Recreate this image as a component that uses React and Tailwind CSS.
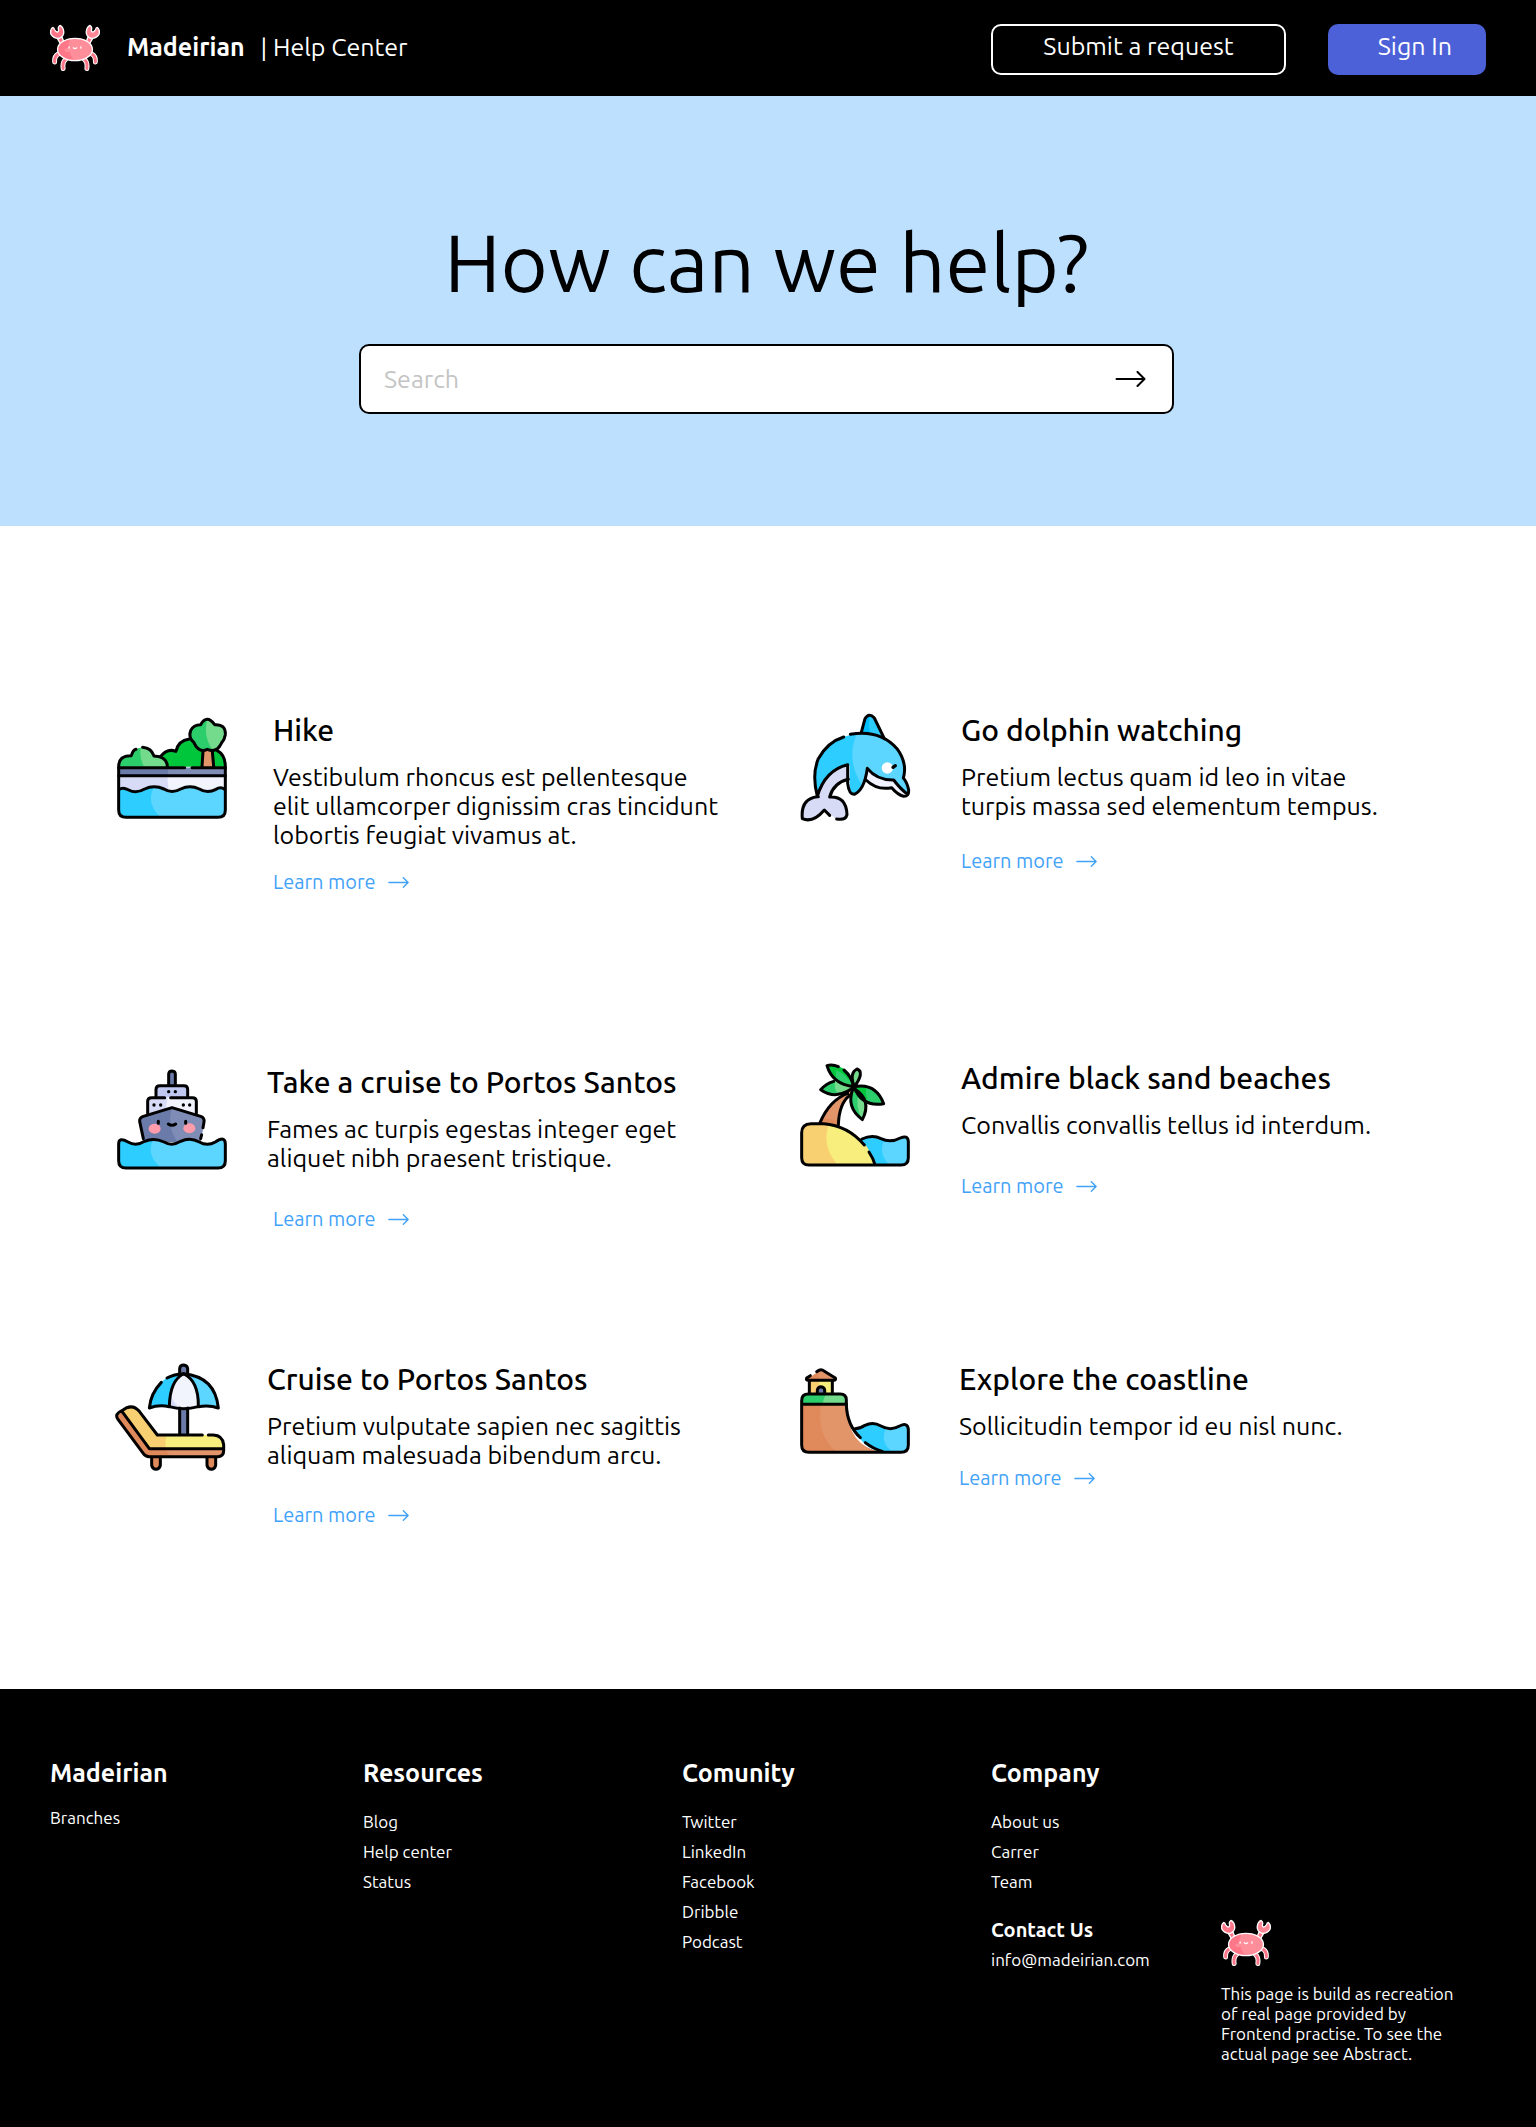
import React from "react";

const outline = {
  stroke: "#000",
  strokeWidth: 9,
  strokeLinecap: "round",
  strokeLinejoin: "round",
  fill: "none",
};

function IconFrame({ top, children }) {
  return (
    <svg
      className="h-[115px] w-[114px] shrink-0"
      viewBox={`45 ${top} 342 345`}
      aria-hidden="true"
    >
      {children}
    </svg>
  );
}

function HikeIcon() {
  return (
    <IconFrame top={30}>
      <path fill="#00C63C" d="M180 200V168Q200 145 230 155Q235 124 270 117L350 150Q374 166 376 200Z" />
      <path fill="#2BCE6A" d="M56 200Q56 166 94 167Q100 145 128 142Q154 144 162 168Q202 170 202 200Z" />
      <path fill="#74DB8C" d="M123 142Q154 144 162 168Q202 170 202 200H132Q116 170 123 142Z" />
      <path fill="#E3956A" d="M309 152H337L341 202H305Z" />
      <path fill="#2BCE6A" d="M302 74Q320 42 344 74Q378 72 376 104Q374 118 364 130Q350 160 322 148Q296 160 282 128Q264 112 272 92Q280 74 302 74Z" />
      <path fill="#74DB8C" d="M322 57Q337 58 344 74Q378 72 376 104Q374 118 364 130Q352 152 338 150Q308 108 322 57Z" />
      <path fill="#6B7BA9" d="M56 203H376V227H56Z" />
      <path fill="#7F8CB5" d="M206 203H376V227H202Z" />
      <path fill="#D7DBF5" d="M56 227H376V272H56Z" />
      <path fill="#F1F3FD" d="M202 227H376V272H206Z" />
      <path fill="#2DCEFF" d="M56 268Q68 260 86 270Q108 282 134 267Q162 254 192 267Q216 282 242 267Q270 254 298 267Q322 282 348 268Q362 258 376 268V330Q376 352 354 352H78Q56 352 56 330Z" />
      <path fill="#5CD5FF" d="M162 262Q178 261 192 267Q216 282 242 267Q270 254 298 267Q322 282 348 268Q362 258 376 268V330Q376 352 354 352H182Q136 310 162 262Z" />
      <g {...outline}>
        <path d="M182 169Q202 144 228 154Q234 122 268 117" />
        <path d="M352 152Q376 165 376 200V330Q376 352 354 352H78Q56 352 56 330V200Q56 166 94 167Q99 150 108 148" />
        <path d="M128 142Q154 144 162 168Q202 170 202 200" />
        <path d="M302 74Q320 42 344 74Q378 72 376 104Q374 118 364 130Q350 160 322 148Q296 160 282 128Q264 112 272 92Q280 74 302 74Z" />
        <path d="M309 154L306 200M337 154L341 200M56 203H254M276 203H376M56 227H376" />
        <path d="M58 268Q68 260 86 270Q108 282 134 267Q162 254 192 267Q216 282 242 267Q270 254 298 267Q322 282 348 268Q362 258 374 268" />
      </g>
    </IconFrame>
  );
}

function DolphinIcon() {
  return (
    <IconFrame top={30}>
      <path fill="#00BFFF" d="M229 98L240 56Q252 36 268 54L296 116Z" />
      <path fill="#2DCEFF" d="M256 46Q264 47 268 54L296 116L256 102Q248 70 256 46Z" />
      <path fill="#D7DBF5" d="M97 290Q110 210 188 193L194 236Q146 244 134 290Q186 290 186 346Q176 368 152 356L118 328Q84 368 50 356Q44 296 97 290Z" />
      <path fill="#F1F3FD" d="M247 204Q276 242 326 240Q352 262 372 288Q344 294 320 263Q270 272 243 240Z" />
      <path fill="#2DCEFF" d="M97 286Q76 218 104 168Q142 104 232 101Q300 104 336 146Q366 186 355 234Q374 258 370 284Q350 262 326 240Q276 238 247 206Q240 262 214 280Q196 286 194 256V196Q124 202 97 286Z" />
      <path fill="#5CD5FF" d="M215 103Q300 98 336 146Q366 186 355 234Q374 258 370 284Q350 262 326 240Q276 238 247 206Q242 240 232 258Q182 180 215 103Z" />
      <circle cx="307" cy="204" r="17" fill="#fff" />
      <g {...outline}>
        <path d="M229 97L240 56Q252 36 268 54L298 116" />
        <path d="M176 111Q128 126 100 176Q80 224 97 289Q120 210 188 194V250Q192 284 208 283Q238 270 247 205Q276 241 326 240Q346 266 363 279" />
        <path d="M196 103Q284 88 336 146Q368 190 355 234Q366 246 371 270Q372 290 356 289Q338 284 320 263Q276 272 243 240" />
        <path d="M190 238Q146 248 134 291Q184 288 186 344Q182 362 155 357M134 346L118 330Q84 370 52 356Q46 296 97 290H100" />
        <path d="M324 202L331 197" strokeWidth="10" />
      </g>
    </IconFrame>
  );
}

function ShipIcon() {
  return (
    <IconFrame top={22}>
      <rect x="206" y="49" width="20" height="46" rx="9" fill="#6B7BA9" />
      <path fill="#BFC8F0" d="M168 128V104Q168 93 180 93H252Q263 93 263 104V128Z" />
      <path fill="#D7DBF5" d="M143 182V140Q143 129 155 129H277Q289 129 289 140V182Z" />
      <path fill="#F1F3FD" d="M203 129H277Q289 129 289 140V182H198Q196 154 203 129Z" />
      <path fill="#6B7BA9" d="M130 262L119 200Q118 189 130 185L216 159L302 185Q314 189 312 200L302 262Z" />
      <path fill="#7F8CB5" d="M216 159L302 185Q314 189 312 200L302 262H232Q200 214 216 159Z" />
      <ellipse cx="164" cy="222" rx="18" ry="15" fill="#FF9CAB" />
      <ellipse cx="268" cy="221" rx="18" ry="15" fill="#FF9CAB" />
      <path fill="#2DCEFF" d="M56 268Q56 246 84 262Q108 276 134 260Q162 248 192 262Q216 276 242 260Q270 246 298 262Q322 276 346 262Q376 242 376 268V318Q376 340 354 340H78Q56 340 56 318Z" />
      <path fill="#5CD5FF" d="M160 254Q178 254 192 262Q216 276 242 260Q270 246 298 262Q322 276 346 262Q376 242 376 268V318Q376 340 354 340H184Q136 302 160 254Z" />
      <g {...outline}>
        <path d="M206 90V58Q207 49 216 49Q226 50 226 58V90" />
        <path d="M168 126V104Q168 93 180 93H252Q263 93 263 104V126" />
        <path d="M143 178V140Q143 129 155 129H194M212 129H277Q289 129 289 140V178" />
        <path d="M130 252L119 200Q118 189 130 185L216 159L302 185Q314 189 312 202L309 219M305 240L302 252" />
        <path d="M56 268Q56 246 84 262Q108 276 134 260Q162 248 192 262Q216 276 242 260Q270 246 298 262Q322 276 346 262Q376 242 376 268V318Q376 340 354 340H78Q56 340 56 318Z" />
        <path d="M175 200V206M257 200V206M205 208Q216 216 227 208" />
      </g>
      <g fill="#000">
        <circle cx="206" cy="111" r="5" />
        <circle cx="226" cy="111" r="5" />
        <circle cx="162" cy="151" r="5" />
        <circle cx="182" cy="151" r="5" />
        <circle cx="250" cy="151" r="5" />
        <circle cx="269" cy="151" r="5" />
      </g>
    </IconFrame>
  );
}

function BeachIcon() {
  return (
    <IconFrame top={26}>
      <path fill="#2DCEFF" d="M230 272Q262 252 288 268Q316 282 346 266Q370 254 370 276V326Q370 348 348 348H268Z" />
      <path fill="#5CD5FF" d="M298 272Q322 280 346 266Q370 254 370 276V326Q370 348 348 348H314Q278 312 298 272Z" />
      <path fill="#E0895A" d="M104 224Q138 152 196 126L202 136Q160 168 160 232Z" />
      <path fill="#E3956A" d="M114 206Q146 148 196 126L202 136Q166 164 160 214Z" />
      <path fill="#F9D071" d="M50 248Q50 226 74 226Q228 208 270 347H72Q50 347 50 325Z" />
      <path fill="#F8EE7E" d="M132 225Q238 240 270 347H158Q108 288 132 225Z" />
      <path fill="#00C63C" d="M126 48Q196 44 207 112Q142 110 126 48Z" />
      <path fill="#2BCE6A" d="M152 62Q184 74 207 112Q174 108 154 94Z" />
      <path fill="#2BCE6A" d="M107 121Q150 74 205 114Q156 150 107 121Z" />
      <path fill="#74DB8C" d="M150 99Q180 98 205 114Q180 132 158 134Q146 116 150 99Z" />
      <path fill="#74DB8C" d="M208 112Q196 70 216 59Q238 66 208 112Z" />
      <path fill="#2BCE6A" d="M208 113Q274 98 297 162Q232 172 208 113Z" />
      <path fill="#00C63C" d="M208 113Q226 108 244 112Q240 132 246 152Q220 142 208 113Z" />
      <path fill="#2BCE6A" d="M205 116Q184 174 232 210Q264 152 205 116Z" />
      <path fill="#74DB8C" d="M222 134Q256 160 232 210Q208 170 222 134Z" />
      <g {...outline}>
        <path d="M160 52Q142 44 126 49Q142 104 205 112Q202 84 177 62" />
        <path d="M146 96Q124 102 107 121Q146 148 185 127Q198 122 205 113" />
        <path d="M208 112Q192 72 216 59Q240 68 208 112Q272 100 296 163Q232 174 208 115" />
        <path d="M204 118Q182 174 232 211Q262 152 208 118" />
        <path d="M105 220Q134 152 188 132M160 228Q162 162 194 138" />
        <path d="M238 287Q188 228 116 223H78Q50 224 50 250V325Q50 347 72 347H348Q370 347 370 325V276Q368 256 346 266Q316 282 288 268Q262 254 231 269M252 308Q264 326 270 346" />
      </g>
    </IconFrame>
  );
}

function LoungerIcon() {
  return (
    <IconFrame top={27}>
      <path fill="#E0895A" d="M155 320H181V348Q178 358 168 358Q158 358 155 348ZM321 320H347V348Q344 358 334 358Q324 358 321 348Z" />
      <path fill="#6B7BA9" d="M239 62Q240 45 251 45Q262 46 263 62V256H239Z" />
      <path fill="#2DCEFF" d="M148 174Q160 76 250 71L208 168Q176 164 148 174Z" />
      <path fill="#5CD5FF" d="M251 71Q346 80 355 174Q328 164 295 168Z" />
      <path fill="#D7DBF5" d="M251 71Q208 92 208 168Q250 182 295 168Q294 90 251 71Z" />
      <path fill="#F1F3FD" d="M251 71Q214 92 214 140Q224 166 244 174Q272 176 295 168Q294 90 251 71Z" />
      <path fill="#E0895A" d="M66 184L51 200L128 308Q136 320 148 320H350Q370 320 370 296H148Z" />
      <path fill="#E3956A" d="M198 296H370Q370 320 350 320H212Q202 312 198 296Z" />
      <path fill="#F9D071" d="M66 184Q96 160 118 184L172 255H350Q370 262 370 296H148Z" />
      <path fill="#F8EE7E" d="M200 255H350Q370 262 370 296H198Q194 274 200 255Z" />
      <g {...outline}>
        <path d="M239 68V56Q240 45 251 45Q262 46 263 56V68M239 174V250M263 174V250" />
        <path d="M184 97Q152 130 148 174Q176 163 208 170Q250 182 295 170Q328 164 355 174Q346 80 251 71Q222 72 201 84" />
        <path d="M250 72Q210 92 208 168M252 72Q296 94 295 168" />
        <path d="M307 255H172L118 184Q96 158 66 182Q42 192 54 208L128 308Q136 320 148 320H354Q371 318 371 302V284Q368 256 340 255H325" />
        <path d="M66 184L148 296H370" />
        <path d="M155 322V346Q158 358 168 358Q178 358 181 346V322M321 322V346Q324 358 334 358Q344 358 347 346V322" />
      </g>
    </IconFrame>
  );
}

function CoastIcon() {
  return (
    <IconFrame top={27}>
      <path fill="#F9D071" d="M73 90H142V132H73Z" />
      <path fill="#F8EE7E" d="M102 90H142V132H102Z" />
      <path fill="#6B7BA9" d="M97 132V120Q99 110 108 110Q118 111 119 120V132Z" />
      <path fill="#E0895A" d="M64 89L108 59L152 89Z" />
      <path fill="#E3956A" d="M101 64L108 59L152 89H104Q98 76 101 64Z" />
      <path fill="#2DCEFF" d="M206 236Q230 236 240 226Q264 212 288 230Q316 244 344 228Q370 214 370 238V285Q370 307 348 307H296Q240 302 206 236Z" />
      <path fill="#5CD5FF" d="M302 236Q322 240 344 228Q370 214 370 238V285Q370 307 348 307H324Q284 278 302 236Z" />
      <path fill="#E0895A" d="M50 163H184Q186 292 292 307H72Q50 307 50 285Z" />
      <path fill="#E3956A" d="M109 163H184Q186 292 292 307H154Q92 252 109 163Z" />
      <path fill="#2BCE6A" d="M50 163V150Q50 132 70 132H166Q184 134 184 150V163Z" />
      <path fill="#74DB8C" d="M124 132H166Q184 134 184 150V163H114Q114 146 124 132Z" />
      <g {...outline}>
        <path d="M76 77L65 84Q62 91 70 91H146Q154 90 151 84L112 60Q106 57 95 65" />
        <path d="M73 94V128M142 94V128M97 130V120Q99 110 108 110Q118 111 119 120V130" />
        <path d="M50 163H184V150Q184 132 166 132H70Q50 132 50 152V285Q50 307 72 307H348Q370 307 370 285V238Q368 216 344 228Q316 244 288 228Q264 214 240 226Q226 236 210 236" />
        <path d="M184 163Q186 226 226 263M241 278Q264 296 292 304" />
      </g>
    </IconFrame>
  );
}

function Crab() {
  const limbs = [
    "M174 165Q162 171 163 189",
    "M276 165Q288 171 287 189",
    "M196 182Q186 190 189 209",
    "M254 182Q264 190 261 209",
  ];
  return (
    <svg className="h-[47px] w-[50px] shrink-0" viewBox="149 74 152 142" role="img" aria-label="Madeirian crab">
      <g fill="none" strokeLinecap="round">
        {limbs.map((d) => (
          <path key={d} d={d} stroke="#fff" strokeWidth="15" />
        ))}
        {limbs.map((d) => (
          <path key={d} d={d} stroke="#FF7789" strokeWidth="9" />
        ))}
      </g>
      <g fill="#FF7789" stroke="#fff" strokeWidth="4" strokeLinejoin="round">
        <path d="M170 115L185 112L192 130L180 133Z" />
        <path d="M280 115L265 112L258 130L270 133Z" />
        <path d="M157 84Q148 92 152 105Q160 118 177 117Q191 112 191 98Q190 83 179 78Q172 83 175 91Q176 97 171 98Q166 97 163 91Q161 84 157 84Z" />
        <path fill="#FF8796" d="M293 84Q302 92 298 105Q290 118 273 117Q259 112 259 98Q260 83 271 78Q278 83 275 91Q274 97 279 98Q284 97 287 91Q289 84 293 84Z" />
      </g>
      <ellipse cx="225" cy="151" rx="53" ry="34" fill="#FF7789" />
      <path fill="#FF8E9B" d="M211 118Q275 112 278 151Q276 184 222 185Q196 148 211 118Z" />
      <ellipse cx="202" cy="153" rx="9" ry="6" fill="#FF8E9B" />
      <ellipse cx="225" cy="151" rx="53" ry="34" fill="none" stroke="#fff" strokeWidth="4" />
      <path d="M207 143V147M243 143V147M220 146Q225 151 230 146" fill="none" stroke="#fff" strokeWidth="4" strokeLinecap="round" />
    </svg>
  );
}

function Arrow({ className, strokeWidth }) {
  return (
    <svg
      className={className}
      viewBox="0 0 30 16"
      fill="none"
      stroke="currentColor"
      strokeWidth={strokeWidth}
      strokeLinecap="round"
      strokeLinejoin="round"
      aria-hidden="true"
    >
      <path d="M1 8H29M22 1L29 8L22 15" />
    </svg>
  );
}

const rows = [
  {
    spacing: "pt-[184px]",
    cards: [
      {
        Icon: HikeIcon,
        title: "Hike",
        lines: ["Vestibulum rhoncus est pellentesque", "elit ullamcorper dignissim cras tincidunt", "lobortis feugiat vivamus at."],
        gap: "gap-11",
        link: "mt-5",
      },
      {
        Icon: DolphinIcon,
        title: "Go dolphin watching",
        lines: ["Pretium lectus quam id leo in vitae", "turpis massa sed elementum tempus."],
        gap: "gap-[47px]",
        link: "mt-7",
      },
    ],
  },
  {
    spacing: "pt-[164px]",
    cards: [
      {
        Icon: ShipIcon,
        title: "Take a cruise to Portos Santos",
        lines: ["Fames ac turpis egestas integer eget", "aliquet nibh praesent tristique."],
        gap: "gap-[38px] pt-1",
        link: "mt-[34px] pl-1.5",
      },
      {
        Icon: BeachIcon,
        title: "Admire black sand beaches",
        lines: ["Convallis convallis tellus id interdum."],
        gap: "gap-[47px]",
        link: "mt-[34px]",
      },
    ],
  },
  {
    spacing: "pt-32",
    cards: [
      {
        Icon: LoungerIcon,
        title: "Cruise to Portos Santos",
        lines: ["Pretium vulputate sapien nec sagittis", "aliquam malesuada bibendum arcu."],
        gap: "gap-[38px]",
        link: "mt-[33px] pl-1.5",
      },
      {
        Icon: CoastIcon,
        title: "Explore the coastline",
        lines: ["Sollicitudin tempor id eu nisl nunc."],
        gap: "gap-[45px]",
        link: "mt-[25px]",
      },
    ],
  },
];

function Card({ Icon, title, lines, gap, link }) {
  return (
    <article className={`flex items-start ${gap}`}>
      <Icon />
      <div className="min-w-0">
        <h2 className="text-[30px] leading-10 font-medium">{title}</h2>
        <p className="mt-[13px] text-[25px] leading-[29px] whitespace-nowrap">
          {lines.map((line) => (
            <span key={line} className="block">
              {line}
            </span>
          ))}
        </p>
        <a
          href="#"
          aria-label={`Learn more: ${title}`}
          className={`flex w-fit items-center gap-3 text-[20px] leading-6 text-[#42A2F8] ${link}`}
        >
          Learn more
          <Arrow className="h-[11px] w-[21px]" strokeWidth="2" />
        </a>
      </div>
    </article>
  );
}

function FooterLinks({ items }) {
  return (
    <ul>
      {items.map((item) => (
        <li key={item}>
          <a href="#">{item}</a>
        </li>
      ))}
    </ul>
  );
}

export default function App() {
  return (
    <div className="w-full bg-white font-[Ubuntu,'Noto_Sans',sans-serif]">
      <div className="font-normal text-black">
        <header className="flex h-24 items-center justify-between bg-black px-[50px] pt-0.5 text-[25px] text-white">
          <a href="#" className="flex items-center pb-[3px]">
            <Crab />
            <span className="ml-[27px] font-bold">Madeirian</span>
            <span className="ml-4">| Help Center</span>
          </a>
          <div className="flex items-center gap-[42px]">
            <button type="button" className="flex h-[51px] w-[295px] items-center justify-center rounded-[10px] border-2 border-white pb-1">
              Submit a request
            </button>
            <button type="button" className="flex h-[51px] w-[158px] items-center justify-end rounded-[10px] bg-[#4C61D8] pr-[34px] pb-1">
              Sign In
            </button>
          </div>
        </header>

        <main>
          <section className="flex flex-col items-center bg-[#BDE0FF] pt-[118px] pr-[3px] pb-[112px]">
            <h1 className="text-[81px] leading-[96px]">How can we help?</h1>
            <form
              role="search"
              onSubmit={(event) => event.preventDefault()}
              className="mt-[34px] flex h-[70px] w-[815px] max-w-full items-center rounded-[10px] border-2 border-black bg-white pr-[26px] pl-[23px]"
            >
              <input
                type="search"
                aria-label="Search"
                placeholder="Search"
                className="min-w-0 flex-1 bg-transparent pt-0.5 text-[25px] outline-none placeholder:text-[#C4C4C4]"
              />
              <button type="submit" aria-label="Submit search">
                <Arrow className="h-4 w-[31px]" strokeWidth="2" />
              </button>
            </form>
          </section>

          <section className="pb-[162px]">
            {rows.map((row) => (
              <div key={row.spacing} className={`grid grid-cols-[685fr_621fr] pr-[115px] pl-[115px] ${row.spacing}`}>
                {row.cards.map((card) => (
                  <Card key={card.title} {...card} />
                ))}
              </div>
            ))}
          </section>
        </main>

        <footer className="grid grid-cols-[313fr_319fr_309fr_230fr_265fr] bg-black px-[50px] pt-[66px] pb-[63px] text-[17px] leading-[30px] text-white">
          <div>
            <h3 className="text-[25px] leading-9 font-bold">Madeirian</h3>
            <div className="mt-3">
              <FooterLinks items={["Branches"]} />
            </div>
          </div>
          <div>
            <h3 className="text-[25px] leading-9 font-bold">Resources</h3>
            <div className="mt-4">
              <FooterLinks items={["Blog", "Help center", "Status"]} />
            </div>
          </div>
          <div>
            <h3 className="text-[25px] leading-9 font-bold">Comunity</h3>
            <div className="mt-4">
              <FooterLinks items={["Twitter", "LinkedIn", "Facebook", "Dribble", "Podcast"]} />
            </div>
          </div>
          <div>
            <h3 className="text-[25px] leading-9 font-bold">Company</h3>
            <div className="mt-4">
              <FooterLinks items={["About us", "Carrer", "Team"]} />
            </div>
            <h4 className="mt-[18px] text-[20px] leading-[30px] font-bold">Contact Us</h4>
            <a href="mailto:info@madeirian.com">info@madeirian.com</a>
          </div>
          <div className="pt-[164px]">
            <Crab />
            <p className="mt-[18px] leading-5 whitespace-nowrap">
              This page is build as recreation
              <br />
              of real page provided by
              <br />
              Frontend practise. To see the
              <br />
              actual page see Abstract.
            </p>
          </div>
        </footer>
      </div>
    </div>
  );
}
